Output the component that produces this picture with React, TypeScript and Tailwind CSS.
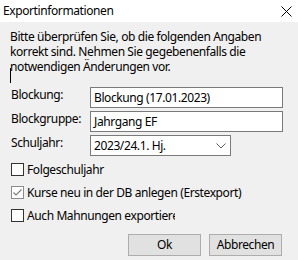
import React from "react";

function Checkbox({ checked, dim }: { checked?: boolean; dim?: boolean }) {
  return (
    <div
      className={`w-[13px] h-[13px] shrink-0 bg-white border flex items-center justify-center ${
        dim ? "border-[#8c8c8c]" : "border-[#333333]"
      }`}
    >
      {checked && (
        <svg width="11" height="11" viewBox="0 0 11 11">
          <path d="M1.5 5.5 L4 8 L9.5 2.5" stroke="#7a7a7a" strokeWidth="1.1" fill="none" />
        </svg>
      )}
    </div>
  );
}

export default function App() {
  return (
    <div
      className="w-[298px] h-[260px] bg-[#f0f0f0] flex flex-col text-[12px] tracking-[-0.4px] text-black overflow-hidden"
      style={{ fontFamily: '"Noto Sans", "Open Sans", sans-serif' }}
    >
      <div className="h-[22px] bg-white flex items-center justify-between pl-[3px] pr-[6px] shrink-0">
        <span className="leading-none">Exportinformationen</span>
        <svg width="11" height="11" viewBox="0 0 11 11">
          <path d="M0.5 0.5 L10.5 10.5 M10.5 0.5 L0.5 10.5" stroke="#000" strokeWidth="1" />
        </svg>
      </div>
      <div className="relative flex flex-col pl-[10px] pr-[15px] pt-[7px]">
        <p className="leading-[15px] whitespace-nowrap">
          Bitte überprüfen Sie, ob die folgenden Angaben
          <br />
          korrekt sind. Nehmen Sie gegebenenfalls die
          <br />
          notwendigen Änderungen vor.
        </p>
        <div className="absolute left-[10px] top-[46px] w-px h-[15px] bg-black" />
        <div className="grid grid-cols-[80px_1fr] gap-y-[3px] mt-[13px]">
          <div className="-mt-[1px] pl-[1px]">Blockung:</div>
          <div className="h-[21px] bg-white border border-[#7a7a7a] flex items-center px-[3px]">
            Blockung (17.01.2023)
          </div>
          <div className="-mt-[1px] pl-[1px]">Blockgruppe:</div>
          <div className="h-[21px] bg-white border border-[#7a7a7a] flex items-center px-[3px]">
            Jahrgang EF
          </div>
          <div className="-mt-[1px] pl-[1px]">Schuljahr:</div>
          <div className="w-[141px] h-[21px] bg-white border border-[#7a7a7a] flex items-center justify-between pl-[3px] pr-[4px]">
            <span>2023/24.1. Hj.</span>
            <svg width="10" height="6" viewBox="0 0 10 6">
              <path d="M0.5 0.5 L5 5 L9.5 0.5" stroke="#606060" strokeWidth="1" fill="none" />
            </svg>
          </div>
        </div>
        <div className="flex flex-col gap-[10px] mt-[7px] pl-[1px]">
          <div className="h-[13px] flex items-center gap-[3px]">
            <Checkbox />
            <span className="whitespace-nowrap">Folgeschuljahr</span>
          </div>
          <div className="h-[13px] flex items-center gap-[3px]">
            <Checkbox checked dim />
            <span className="whitespace-nowrap">Kurse neu in der DB anlegen (Erstexport)</span>
          </div>
          <div className="h-[13px] flex items-center gap-[3px]">
            <Checkbox />
            <span className="whitespace-nowrap w-[148px] overflow-hidden">Auch Mahnungen exportieren</span>
          </div>
        </div>
        <div className="flex justify-end gap-[8px] mt-[12px] mr-[1px]">
          <button className="w-[73px] h-[22px] bg-[#e1e1e1] border border-[#adadad] flex items-center justify-center">
            Ok
          </button>
          <button className="w-[73px] h-[22px] bg-[#e1e1e1] border border-[#adadad] flex items-center justify-center">
            Abbrechen
          </button>
        </div>
      </div>
    </div>
  );
}
